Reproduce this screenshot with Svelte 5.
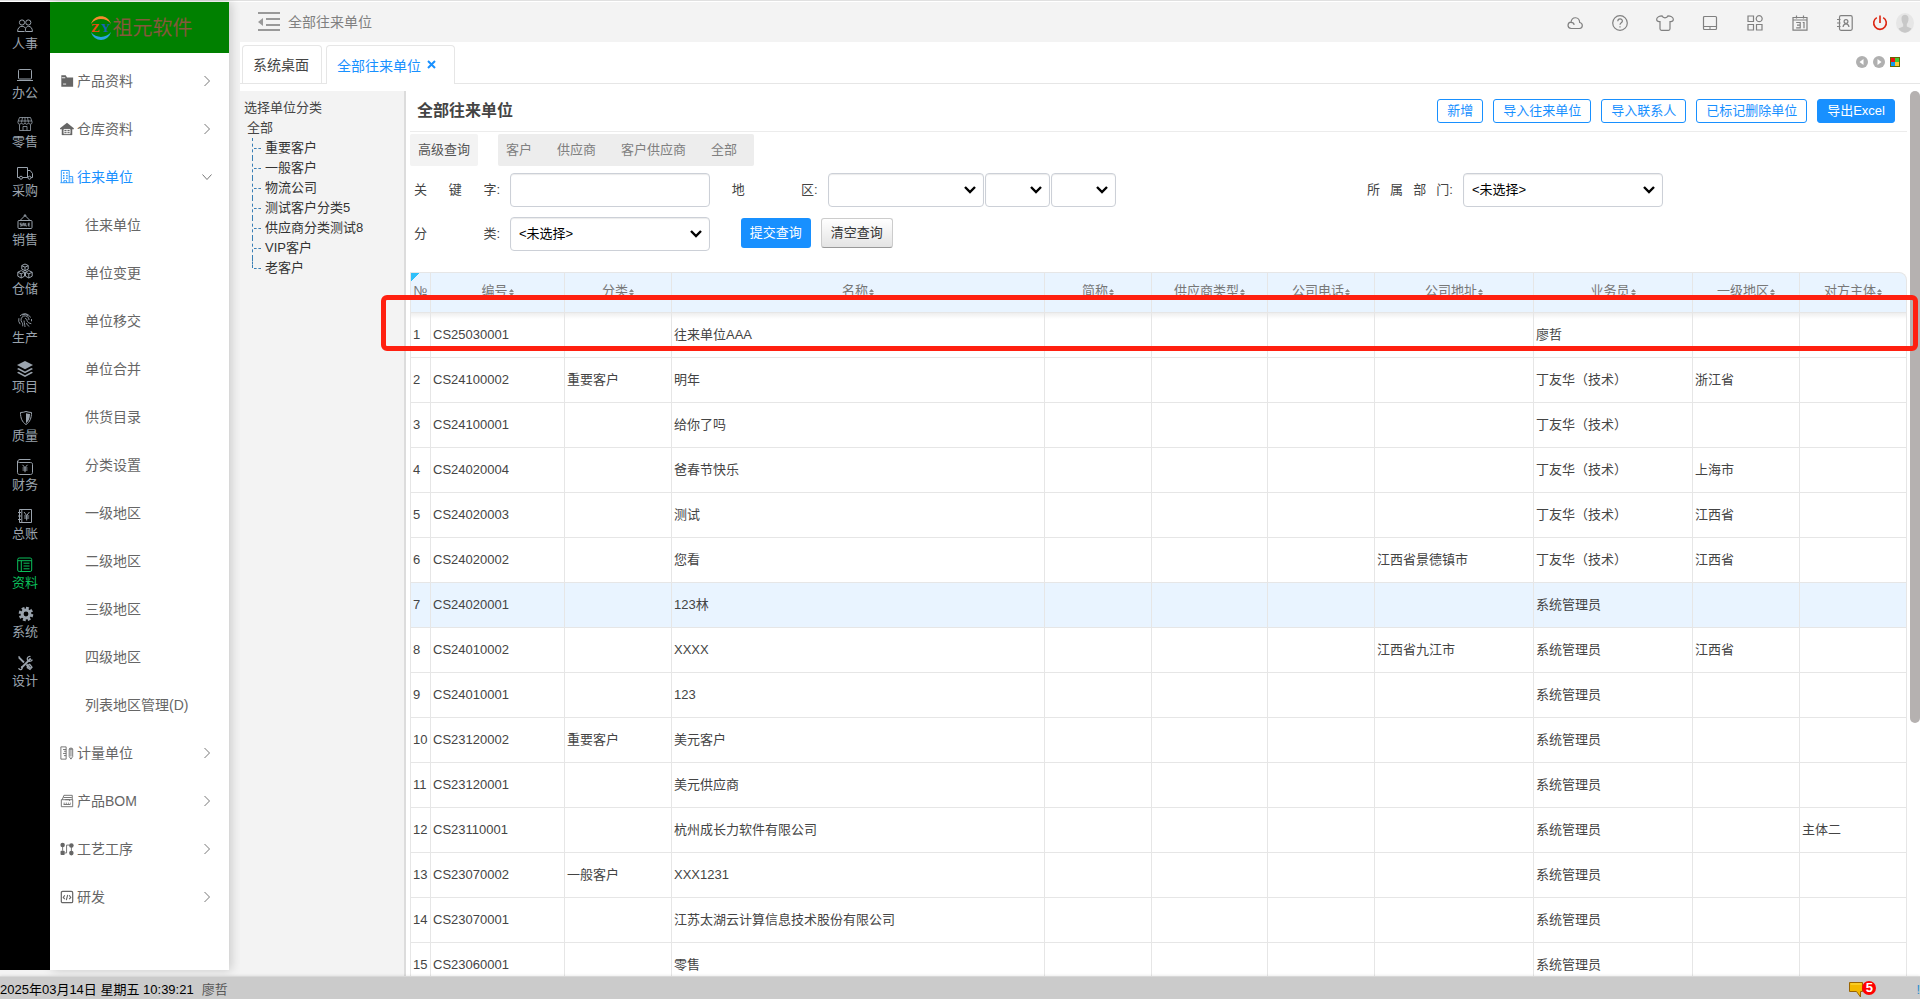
<script>
  const rail = [
    ['人事', 'people'], ['办公', 'laptop'], ['零售', 'shop'], ['采购', 'truck'], ['销售', 'sale'],
    ['仓储', 'boxes'], ['生产', 'finger'], ['项目', 'layers'], ['质量', 'shield'], ['财务', 'yen'],
    ['总账', 'ledger'], ['资料', 'doc'], ['系统', 'gear'], ['设计', 'tools']
  ];
  const menu = [
    { text: '产品资料', icon: 'folder' },
    { text: '仓库资料', icon: 'house' },
    {
      text: '往来单位', icon: 'building', open: true,
      children: ['往来单位', '单位变更', '单位移交', '单位合并', '供货目录', '分类设置', '一级地区', '二级地区', '三级地区', '四级地区', '列表地区管理(D)']
    },
    { text: '计量单位', icon: 'ruler' },
    { text: '产品BOM', icon: 'archive' },
    { text: '工艺工序', icon: 'flow' },
    { text: '研发', icon: 'code' }
  ];
  const tools = [
    ['云', 'cloud'], ['帮助', 'help'], ['皮肤', 'shirt'], ['桌面', 'tablet'],
    ['应用', 'apps'], ['日历', 'calendar'], ['通讯录', 'contact']
  ];
  const tree = ['重要客户', '一般客户', '物流公司', '测试客户分类5', '供应商分类测试8', 'VIP客户', '老客户'];
  const columns = [
    ['编号', 'w-code'], ['分类', 'w-m'], ['名称', ''], ['简称', 'w-m'], ['供应商类型', 'w-type'], ['公司电话', 'w-m'],
    ['公司地址', 'w-l'], ['业务员', 'w-l'], ['一级地区', 'w-m'], ['对方主体', 'w-m']
  ];
  const row = (code, kind, name, addr, man, area, body = '') => [code, kind, name, '', '', '', addr, man, area, body];
  const rows = [
    row('CS25030001', '', '往来单位AAA', '', '廖哲', ''),
    row('CS24100002', '重要客户', '明年', '', '丁友华（技术）', '浙江省'),
    row('CS24100001', '', '给你了吗', '', '丁友华（技术）', ''),
    row('CS24020004', '', '爸春节快乐', '', '丁友华（技术）', '上海市'),
    row('CS24020003', '', '测试', '', '丁友华（技术）', '江西省'),
    row('CS24020002', '', '您看', '江西省景德镇市', '丁友华（技术）', '江西省'),
    row('CS24020001', '', '123林', '', '系统管理员', ''),
    row('CS24010002', '', 'XXXX', '江西省九江市', '系统管理员', '江西省'),
    row('CS24010001', '', '123', '', '系统管理员', ''),
    row('CS23120002', '重要客户', '美元客户', '', '系统管理员', ''),
    row('CS23120001', '', '美元供应商', '', '系统管理员', ''),
    row('CS23110001', '', '杭州成长力软件有限公司', '', '系统管理员', '', '主体二'),
    row('CS23070002', '一般客户', 'XXX1231', '', '系统管理员', ''),
    row('CS23070001', '', '江苏太湖云计算信息技术股份有限公司', '', '系统管理员', ''),
    row('CS23060001', '', '零售', '', '系统管理员', '')
  ];
</script>

{#snippet icon(name)}
  <svg class="ico" viewBox="0 0 16 16" fill="none" stroke="currentColor" stroke-width="1" aria-hidden="true">
    {#if name === 'people'}
      <circle cx="5" cy="4.5" r="2.6" /><circle cx="11.3" cy="4.5" r="2.6" />
      <path d="M.6 13.5c0-3.4 2-5.2 4.4-5.2 1.5 0 2.6.7 3.3 1.7M.6 13.5h7M8.6 13.5h6.8c0-3.2-1.6-5.2-4-5.2-1.6 0-3.6 1.4-2.8 5.2z" />
    {:else if name === 'laptop'}
      <rect x="1.5" y="2.5" width="13" height="9.5" rx="1" /><path d="M0 13.5h16" />
    {:else if name === 'shop'}
      <path stroke-width=".8" d="M2.500 1.500h11l1.500 4v1.200c0 2-2.800 2-3.500.2-.8 1.800-3 1.800-3.500 0-.7 1.800-2.800 1.800-3.500 0C3.800 8.700 1 8.700 1 6.700V5.500zM1 5h14M2.500 8.500v6h11v-6M6 14.500v-4h4v4M5.500 1.500L4.500 6.500M10.500 1.500l1 5M8 1.500v5" />
    {:else if name === 'truck'}
      <path d="M2.600 12.500H.5v-10h10v10H5.500M10.500 5.500h2.700l2.300 3v4h-1.600M10.500 12.500h.6" /><circle cx="4" cy="12.700" r="1.500" /><circle cx="12.500" cy="12.700" r="1.500" />
    {:else if name === 'sale'}
      <rect x="1" y="6.500" width="14" height="8" rx="1" /><path d="M3 6.500L8 1.500l5 5" /><circle cx="8" cy="1.500" r=".8" />
      <path stroke-width=".9" d="M4.700 9.200H3.200v1.300h1.500v1.500H3M5.800 12.200V9.300h1.500v2.900M5.800 10.800h1.500M8.700 9v3h1.200M12.800 9.200h-1.500v2.800h1.500M11.300 10.600h1.400" />
    {:else if name === 'boxes'}
      <path d="M8 1l3.200 1.500v3.600L8 7.700 4.800 6.100V2.500zM4.800 2.700L8 4.200l3.200-1.500M8 4.200v3.500M4.200 7.600l3.300 1.600v4L4.200 15 .8 13.200v-4zM.8 9.300l3.400 1.500 3.300-1.500M4.200 10.800V15M11.800 7.600l3.400 1.600v4L11.800 15l-3.300-1.800v-4zM8.500 9.300l3.300 1.500 3.400-1.500M11.800 10.800V15" />
    {:else if name === 'finger'}
      <path stroke-width=".9" d="M13.500 5.500A6.300 6.300 0 0 0 3 4M1.900 6.200a6.500 6.500 0 0 0 1.300 6M12 8A4 4 0 1 0 5 10.500c.7.800 1 2 .6 3.800M8 6.500c1.400 0 2 .8 2 2 0 1.500 2.500 3 4.300 3.200M7 8.500c.4 3 .8 4.500 1 6.500M9.500 11c.5 1.600 1.300 2.600 2.800 3.500M14.500 7v2.300M5 3a5 5 0 0 1 6.500 1" />
    {:else if name === 'layers'}
      <g fill="currentColor" stroke="none"><path d="M8 0l8 4-8 4.200L0 4z" /><path d="M1.600 7L0 8l8 4.200L16 8l-1.600-1L8 10.400z" /><path d="M1.600 10.700L0 11.700l8 4.200 8-4.200-1.600-1L8 14.200z" /></g>
    {:else if name === 'shield'}
      <path d="M9 1.500c2 .6 4 1 5.500 1 0 5.500-1.500 9.500-5.500 12-4-2.500-5.500-6.500-5.500-12 2 0 3.800-.4 5.500-1z" /><path fill="currentColor" stroke="none" d="M9 3.200c1.500.4 2.700.7 4 .8-.1 4.300-1.200 7.200-4 9.300z" />
    {:else if name === 'yen'}
      <path d="M3 .5h10.500M2.500 3.500C-.2 3.500.5.500 3 .500M2.500 3.500h11c1.200 0 2 .6 2 1.800v8.200c0 1.200-.8 2-2 2h-11c-1.200 0-2-.8-2-2V2" /><path d="M5.500 5.800L8 8.600l2.500-2.800M8 8.600v4.600M5.500 9h5M5.500 11h5" />
    {:else if name === 'ledger'}
      <path d="M2.500 1.500h12v13h-12zM4.800 1.500v13M1 4.500h3M1 8h3M1 11.500h3" /><path d="M7 4l2.700 3.500L12.400 4M9.700 7.500v5M7.200 8h5M7.200 10h5" />
    {:else if name === 'doc'}
      <rect x=".7" y="1" width="14" height="13.500" rx="1.500" /><path d="M1 3.700h13.500M4.300 3.700v10.500" /><path d="M6.500 6.200h6M6.500 9h6M6.500 11.800h6" />
    {:else if name === 'gear'}
      <circle cx="9" cy="8" r="3.900" stroke-width="3" /><path stroke-width="2.600" stroke-dasharray="2.800 1.910" d="M9 2a6 6 0 1 1-.01 0" />
    {:else if name === 'tools'}
      <path stroke-width="1.800" d="M2 2.500l5 5M9.500 9.500l4 4M13.800 3.500l-9.500 9.500" /><path stroke-width="1.300" d="M13.500 1.500a2.500 2.500 0 1 0 1.700 3M1.200 1.800l1.800.4M1.800 13a1.700 1.700 0 1 0 2.500-1.500M10.500 10.500l2.200-1.200 2.300 3-2 2.200-2.700-1.800z" />
    {:else if name === 'folder'}
      <path fill="currentColor" stroke="none" d="M1.500 1.500h5L8 4h7v10.500H1.500z" /><path stroke="#fff" d="M3.500 11.500H7M2 4.300h4" />
    {:else if name === 'house'}
      <g fill="currentColor" stroke="none"><path d="M8 .8L15.800 7v1.300H0V7z" /><path d="M2 7.500h12V15H2z" /></g><path stroke="#fff" d="M4.500 8.500v4.800h7V8.500zM8 8.500v5M4.500 11h7" />
    {:else if name === 'building'}
      <path d="M1.500 14.500V.500h9v14M10.500 7.500h4v7M.5 14.500h15M4.500 14.500v-2.300h3v2.300M12.500 9.500v1.500M12.500 12v1" /><path stroke-width="1.600" stroke-dasharray="1.600 2" d="M3.500 3.500h6M3.500 6.500h6M3.500 9.500h6" />
    {:else if name === 'ruler'}
      <path d="M1 1h6v14H1zM3.500 4H7M4.500 6H7M3.500 8.500H7M4.500 11H7M10.500 3.500h4V12l-2 3-2-3zM12.500 3.500V12M10.500 3.500c0-1.500 4-1.500 4 0" />
    {:else if name === 'archive'}
      <path d="M1.500 6.500h13v8h-13zM2.500 6.500l2-5h9.500v5M4 4h9.500M6 6.500h5V8" /><path stroke-dasharray="1.500 1" d="M4 10.500h8.500" /><path d="M4 12h8" />
    {:else if name === 'flow'}
      <g fill="currentColor" stroke="none"><circle cx="3" cy="3.500" r="2.600" /><rect x=".6" y="10" width="4.800" height="4.800" rx="1" /><circle cx="13" cy="4" r="2.600" /><circle cx="13" cy="12.700" r="2.600" /></g><path d="M3 5v5M5.500 12.500h2v-9h3M13 5.500v6" />
    {:else if name === 'code'}
      <rect x="1.500" y="1.500" width="13" height="13" rx="1.500" stroke-width="1.400" /><path stroke-width="1.300" d="M5.500 6L3.700 8.500l1.800 2M10.500 6l1.800 2.500-1.800 2M8.800 5.500l-1.600 6" />
    {:else if name === 'cloud'}
      <path stroke-width="1.200" d="M4.200 13.500h8.300c3.800-.5 3.600-5.400.2-6C12.300 1.500 5 1 4 7.200.2 7.500-.2 13 4.200 13.500zM4 7.300c2 0 3 1 3.200 2.500" />
    {:else if name === 'help'}
      <circle cx="8" cy="8" r="7.300" stroke-width="1.200" /><path stroke-width="1.200" d="M5.800 6.300c0-3.200 4.600-3 4.600-.3C10.400 7.800 8 7.800 8 9.800M8 11.200v1.300" />
    {:else if name === 'shirt'}
      <path stroke-width="1.200" d="M5 .8C2.500.8 0 2.200-.3 4c-.2 1.500.8 3 3.300 2.600v7.200c0 1 .6 1.500 1.500 1.500h7c.9 0 1.500-.5 1.500-1.500V6.600c2.500.4 3.500-1.100 3.300-2.600C16 2.200 13.500.8 11 .8 10 3.500 6 3.500 5 .8z" />
    {:else if name === 'tablet'}
      <rect x="1.500" y="1.500" width="13" height="13" rx="1" stroke-width="1.200" /><path stroke-width="1.200" d="M1.500 11.500h13M7 13h2" />
    {:else if name === 'apps'}
      <path stroke-width="1.200" d="M1 1h5.500v5.500H1zM1 9.500h5.500V15H1zM9.500 9.500H15V15H9.500zM12.200.7a3 3 0 1 1-.01 0z" />
    {:else if name === 'calendar'}
      <path stroke-width="1.200" d="M1 2.500h14v12.700H1zM1 5h14M4.500.5v3M11.500.5v3M4.200 7.500h4v5.300h-4M5 10.100h3M10.700 7.500H12v5.800" />
    {:else if name === 'contact'}
      <rect x="2.500" y=".7" width="12.700" height="14.600" rx="1.500" stroke-width="1.200" /><path stroke-width="1.200" d="M0 4.500h3.500M0 8h3.500M0 11.500h3.500M6 12c.3-2 1.200-3.200 3-3.200s2.700 1.200 3 3.200" /><circle cx="9" cy="6.500" r="1.900" stroke-width="1.200" />
    {:else if name === 'power'}
      <path stroke-width="1.600" d="M4.800 2.600a6.300 6.300 0 1 0 6.400 0M8 .5v7.500" />
    {:else if name === 'right'}
      <path d="M5.500 3l5 5-5 5" />
    {:else if name === 'down'}
      <path d="M3.500 5.500l4.500 5 4.500-5" />
    {/if}
  </svg>
{/snippet}

{#snippet caption(id, parts)}
  <label for={id}>{#each parts as p}<span>{p}</span>{/each}</label>
{/snippet}

<div class="app">
  <div class="topline"></div>
  <div class="shell">
    <nav class="rail" aria-label="模块">
      {#each rail as [text, name]}
        <button class="mod" class:active={name === 'doc'}>{@render icon(name)}<span>{text}</span></button>
      {/each}
    </nav>

    <aside class="side">
      <div class="brand">
        <svg width="24" height="26" viewBox="0 0 24 26" aria-hidden="true">
          <path d="M2 9C5-1.500 19-1.500 22 9c-4-6-15-7-20 0z" fill="#f58a2c" />
          <path d="M2 17c3 10.500 17 10.500 20 0-4 6-15 7-20 0z" fill="#2aa5e0" />
          <text x="2" y="17" font-family="Liberation Serif, serif" font-size="13" font-weight="700" fill="#f04a14">Z</text>
          <text x="12" y="17" font-family="Liberation Serif, serif" font-size="13" font-weight="700" fill="#1b63b8">Y</text>
        </svg>
        <span>祖元软件</span>
      </div>
      <div class="menu">
        {#each menu as m}
          <button class="item" class:open={m.open}>
            {@render icon(m.icon)}<span>{m.text}</span><i>{@render icon(m.open ? 'down' : 'right')}</i>
          </button>
          {#each m.children ?? [] as c}
            <button class="item sub">{c}</button>
          {/each}
        {/each}
      </div>
    </aside>

    <div class="work">
      <header>
        <svg class="fold" width="22" height="20" viewBox="0 0 22 20" stroke="#999" stroke-width="2" aria-hidden="true">
          <path d="M0 1h22M8 7h14M8 13h14M0 18h22" /><path d="M0 10l5-4v8z" fill="#999" stroke="none" />
        </svg>
        <span>全部往来单位</span>
        <div class="tools">
          {#each tools as [label, name]}
            <button aria-label={label}>{@render icon(name)}</button>
          {/each}
          <button class="power" aria-label="退出">{@render icon('power')}</button>
          <svg class="avatar" width="18" height="20" viewBox="0 0 18 20" aria-hidden="true">
            <ellipse cx="9" cy="10" rx="9" ry="10" fill="#e6e6e6" />
            <path d="M5.500 5.500c0-5 7-5 7 0 0 3-1 4.500-1.700 5.500v2.500l4.700 2c-3 5.500-10 5.500-13 0l4.700-2V11c-.8-1-1.700-2.500-1.700-5.500z" fill="#c8c8c8" />
          </svg>
        </div>
      </header>

      <div class="tabs">
        <button class="tab">系统桌面</button>
        <button class="tab on">全部往来单位 <svg width="9" height="9" viewBox="0 0 9 9" stroke="currentColor" stroke-width="2" aria-hidden="true"><path d="M1 1l7 7M8 1L1 8" /></svg></button>
        <div class="nav">
          <svg width="12" height="12" viewBox="0 0 12 12" aria-hidden="true"><circle cx="6" cy="6" r="6" fill="#b0b0b0" /><path d="M7.500 3v6l-4-3z" fill="#fff" /></svg>
          <svg width="12" height="12" viewBox="0 0 12 12" aria-hidden="true"><circle cx="6" cy="6" r="6" fill="#b0b0b0" /><path d="M4.500 3v6l4-3z" fill="#fff" /></svg>
          <svg width="10" height="10" viewBox="0 0 10 10" aria-hidden="true"><path fill="#660" d="M0 0h10v10H0z" /><path fill="#e11" d="M1 1h4v4H1z" /><path fill="#4c3" d="M5 1h4v4H5z" /><path fill="#19e" d="M1 5h4v4H1z" /><path fill="#fc3" d="M5 5h4v4H5z" /></svg>
        </div>
      </div>

      <div class="content">
        <div class="tree">
          <div>选择单位分类</div>
          <a class="root" href="#all">全部</a>
          <ul>
            {#each tree as t}<li><a href="#node">{t}</a></li>{/each}
          </ul>
        </div>

        <main>
          <div class="title">
            <h1>全部往来单位</h1>
            <button class="act">新增</button>
            <button class="act">导入往来单位</button>
            <button class="act">导入联系人</button>
            <button class="act">已标记删除单位</button>
            <button class="act solid">导出Excel</button>
          </div>

          <div class="quick">
            <button class="adv">高级查询</button>
            <div class="group"><button>客户</button><button>供应商</button><button>客户供应商</button><button>全部</button></div>
          </div>

          <form onsubmit={(e) => e.preventDefault()}>
            <div class="field">{@render caption('kw', ['关', '键', '字:'])}<input id="kw" type="text" /></div>
            <div class="field">
              {@render caption('area', ['地', '区:'])}
              <div class="trio">
                <select id="area" class="a1"><option></option></select>
                <select class="a2" aria-label="二级地区"><option></option></select>
                <select class="a2" aria-label="三级地区"><option></option></select>
              </div>
            </div>
            <div class="field">{@render caption('dept', ['所', '属', '部', '门:'])}<select id="dept"><option>&lt;未选择&gt;</option></select></div>
            <div class="field">{@render caption('kind', ['分', '类:'])}<select id="kind"><option>&lt;未选择&gt;</option></select></div>
            <div class="field btns"><button class="go">提交查询</button><button class="clear" type="reset">清空查询</button></div>
          </form>

          <div class="grid">
            <table>
              <colgroup><col class="w-no" />{#each columns as c}<col class={c[1]} />{/each}</colgroup>
              <thead>
                <tr>
                  <th class="no">№</th>
                  {#each columns as c}
                    <th>{c[0]}<svg width="5" height="7" viewBox="0 0 5 7" fill="#888" aria-hidden="true"><path d="M2.500 0L5 3H0zM0 4h5L2.500 7z" /></svg></th>
                  {/each}
                </tr>
              </thead>
              <tbody>
                {#each rows as r, i}
                  <tr class:hot={i === 6}><td>{i + 1}</td>{#each r as v}<td>{v}</td>{/each}</tr>
                {/each}
              </tbody>
            </table>
            <div class="mark"></div>
          </div>
        </main>
        <div class="scroll"><div></div></div>
      </div>
    </div>
  </div>

  <footer>
    <span>2025年03月14日 星期五 10:39:21</span><span class="user">廖哲</span>
    <div class="msg">
      <svg width="14" height="16" viewBox="0 0 14 16" aria-hidden="true"><path d="M.5.500h13v9h-2V15l-4-5.500h-7z" fill="#f3b800" stroke="#9a6400" /><path d="M1.500 2h11" stroke="#ffe14d" /></svg>
      <b>5</b>
    </div>
    <em>!</em>
  </footer>
</div>

<style>
  :global(body) { background: #f3f3f3; }
  .app {
    display: flex; flex-direction: column; height: 100vh; overflow: hidden;
    font: 13px/20px "Liberation Sans", "Noto Sans CJK SC", sans-serif; color: #444;
  }
  .app *, .app *::before { box-sizing: border-box; }
  button { font: inherit; color: inherit; background: none; border: 0; padding: 0; white-space: nowrap; }
  a { color: inherit; text-decoration: none; }
  svg { flex: none; }
  .ico { width: 16px; height: 16px; display: block; overflow: visible; }
  .topline { flex: none; height: 2px; background: #fff; border-top: 1px solid #e0e0e0; }
  .shell { flex: 1; min-height: 0; display: flex; }

  .rail { width: 50px; margin-bottom: 6px; padding-top: 16px; background: #000; color: #9aa3ad; overflow: hidden; }
  .mod { display: flex; flex-direction: column; align-items: center; width: 100%; height: 49px; }
  .mod span { line-height: 20px; }
  .mod.active { color: #0abf5b; }

  .side { width: 179px; margin-bottom: 6px; background: #fff; box-shadow: 2px 0 10px rgba(0, 0, 0, .18); }
  .brand { display: flex; align-items: center; justify-content: center; height: 51px; padding-left: 14px; padding-right: 12px; background: #008000; color: #85583c; font-size: 20px; }
  .menu { padding-top: 4px; }
  .item { display: flex; align-items: center; width: 100%; height: 48px; padding: 0 14px 0 10px; gap: 3px; font-size: 14px; color: #666; text-align: left; }
  .item :global(.ico) { width: 14px; height: 14px; }
  .item i { margin-left: auto; color: #777; }
  .item i :global(.ico) { width: 16px; height: 16px; }
  .item.open { color: #1890ff; }
  .item.sub { padding-left: 35px; }

  .work { flex: 1; min-width: 0; margin-left: 11px; display: flex; flex-direction: column; background: #fff; }
  header { flex: none; display: flex; align-items: center; height: 40px; padding-left: 18px; background: #f3f3f3; color: #808080; font-size: 14px; }
  .fold { margin-right: 8px; }
  .tools { margin-left: auto; display: flex; align-items: center; gap: 29px; padding: 2px 6px 0 0; }
  .power { color: #dc2410; margin-left: -10px; }
  .avatar { margin-left: -21px; }

  .tabs { flex: none; display: flex; align-items: flex-end; gap: 4px; height: 42px; padding: 3px 19px 0 2px; border-bottom: 1px solid #e6e6e6; font-size: 14px; }
  .tab { height: 38px; padding: 0 12px 0 10px; border: 1px solid #e6e6e6; border-bottom: 0; border-radius: 4px 4px 0 0; }
  .tab.on { height: 39px; margin-bottom: -1px; padding: 2px 18px 0 10px; background: #fff; color: #1890ff; }
  .tab svg { margin-left: 2px; vertical-align: 2px; }
  .nav { display: flex; gap: 5px; align-items: center; margin: 0 1px 15px auto; }

  .content { flex: 1; min-height: 0; display: flex; margin-top: 7px; overflow: hidden; }
  .tree { flex: none; width: 166px; padding: 7px 4px; background: #f3f3f3; border-right: 2px solid #dcdcdc; white-space: nowrap; }
  .root { display: block; padding-left: 3px; }
  ul { list-style: none; margin: 0 0 0 8px; padding: 0; }
  li { display: flex; align-items: center; position: relative; padding-left: 13px; color: #333; }
  li::before { content: ""; position: absolute; left: 0; top: 0; width: 9px; height: 100%; border-left: 1px dashed #3a7fb5; }
  li:last-child::before { height: 10px; }
  li::after { content: ""; position: absolute; left: 2px; top: 10px; width: 7px; border-top: 1px dashed #3a7fb5; }

  main { flex: 1; min-width: 0; padding: 0 3px 0 4px; }
  .title { display: flex; align-items: center; gap: 10px; height: 41px; padding: 0 12px 0 7px; border-bottom: 1px solid #ececec; }
  h1 { margin: 0 auto 0 0; font-size: 16px; line-height: 24px; }
  .act { height: 24px; padding: 0 9px; line-height: 20px; border: 1px solid #1890ff; border-radius: 3px; color: #1890ff; }
  .solid { background: #1890ff; color: #fff; }

  .quick { display: flex; gap: 20px; padding-top: 2px; height: 34px; }
  .adv { padding: 0 8px; background: #f3f3f3; border-radius: 2px; color: #555; }
  .group { display: flex; background: #ededed; border-radius: 2px; color: #808080; }
  .group button { padding: 0 17px 0 8px; }

  form { display: grid; grid-template-columns: 10fr 20fr 17fr; row-gap: 10px; padding: 7px 0 21px 4px; }
  .field { display: flex; gap: 10px; align-items: center; height: 34px; white-space: nowrap; }
  label { display: flex; justify-content: space-between; width: 86px; }
  input, select { width: 200px; height: 34px; padding: 0 8px; font: inherit; color: #000; background: #fff; border: 1px solid #ccd0d7; border-radius: 4px; box-shadow: inset 0 1px 1px rgba(0, 0, 0, .08); }
  select {
    appearance: none;
    background: #fff url("data:image/svg+xml,%3Csvg xmlns='http://www.w3.org/2000/svg' width='12' height='8' fill='none' stroke='black' stroke-width='2.400'%3E%3Cpath d='M1 1l5 5 5-5'/%3E%3C/svg%3E") no-repeat right 7px center;
  }
  .trio { display: flex; gap: 1px; }
  .a1 { width: 156px; }
  .a2 { width: 65px; }
  .btns { padding: 0 0 2px 9px; }
  .go, .clear { height: 30px; border-radius: 3px; padding: 0 9px; }
  .go { background: #1890ff; color: #fff; }
  .clear { border: 1px solid #ccc; border-bottom-color: #999; background: linear-gradient(#fff, #e4e4e4); color: #333; }

  .grid { position: relative; }
  table { width: 100%; table-layout: fixed; border-collapse: separate; border-spacing: 0; border-left: 1px solid #e6e6e6; white-space: nowrap; }
  .w-no { width: 20px; }
  .w-code { width: 134px; }
  .w-m { width: 107px; }
  .w-type { width: 116px; }
  .w-l { width: 159px; }
  th, td { border: solid #e6e6e6; border-width: 0 1px 1px 0; padding: 0 2px; text-align: left; }
  th { height: 41px; border-top-width: 1px; padding: 0 2px 3px; background: #e9f4ff; color: #777; font-weight: 400; text-align: center; }
  th svg { vertical-align: -1px; margin-left: 1px; }
  th.no { background: linear-gradient(135deg, #2fc0fa 6px, #e9f4ff 6px); }
  th:last-child { border-top-right-radius: 8px; }
  td { height: 45px; }
  tbody tr:first-child td { background: linear-gradient(#eee, #fff 6px); }
  .hot td { background: #e9f4ff; }
  .mark { position: absolute; inset: 23px -11px auto -29px; height: 56px; border: 5px solid #ff2010; border-radius: 6px; z-index: 2; }

  .scroll { flex: none; width: 10px; }
  .scroll div { height: 632px; max-height: 72%; background: #b5b1b0; border-radius: 5px; }

  footer { flex: none; display: flex; align-items: center; height: 23px; padding-top: 3px; background: #cbcbcb; border-top: 1px solid #d8d8d8; color: #000; line-height: 20px; position: relative; box-shadow: 0 0 3px rgba(0, 0, 0, .12); }
  .user { margin-left: 8px; color: #555; }
  .msg { display: flex; margin-left: auto; margin-right: 40px; align-items: center; }
  b { width: 14px; height: 14px; margin: -4px 0 0 -1px; border-radius: 7px; background: #f00; color: #fff; font-size: 13px; line-height: 14px; text-align: center; }
  em { font-style: normal; color: #2a8fd0; }
</style>
